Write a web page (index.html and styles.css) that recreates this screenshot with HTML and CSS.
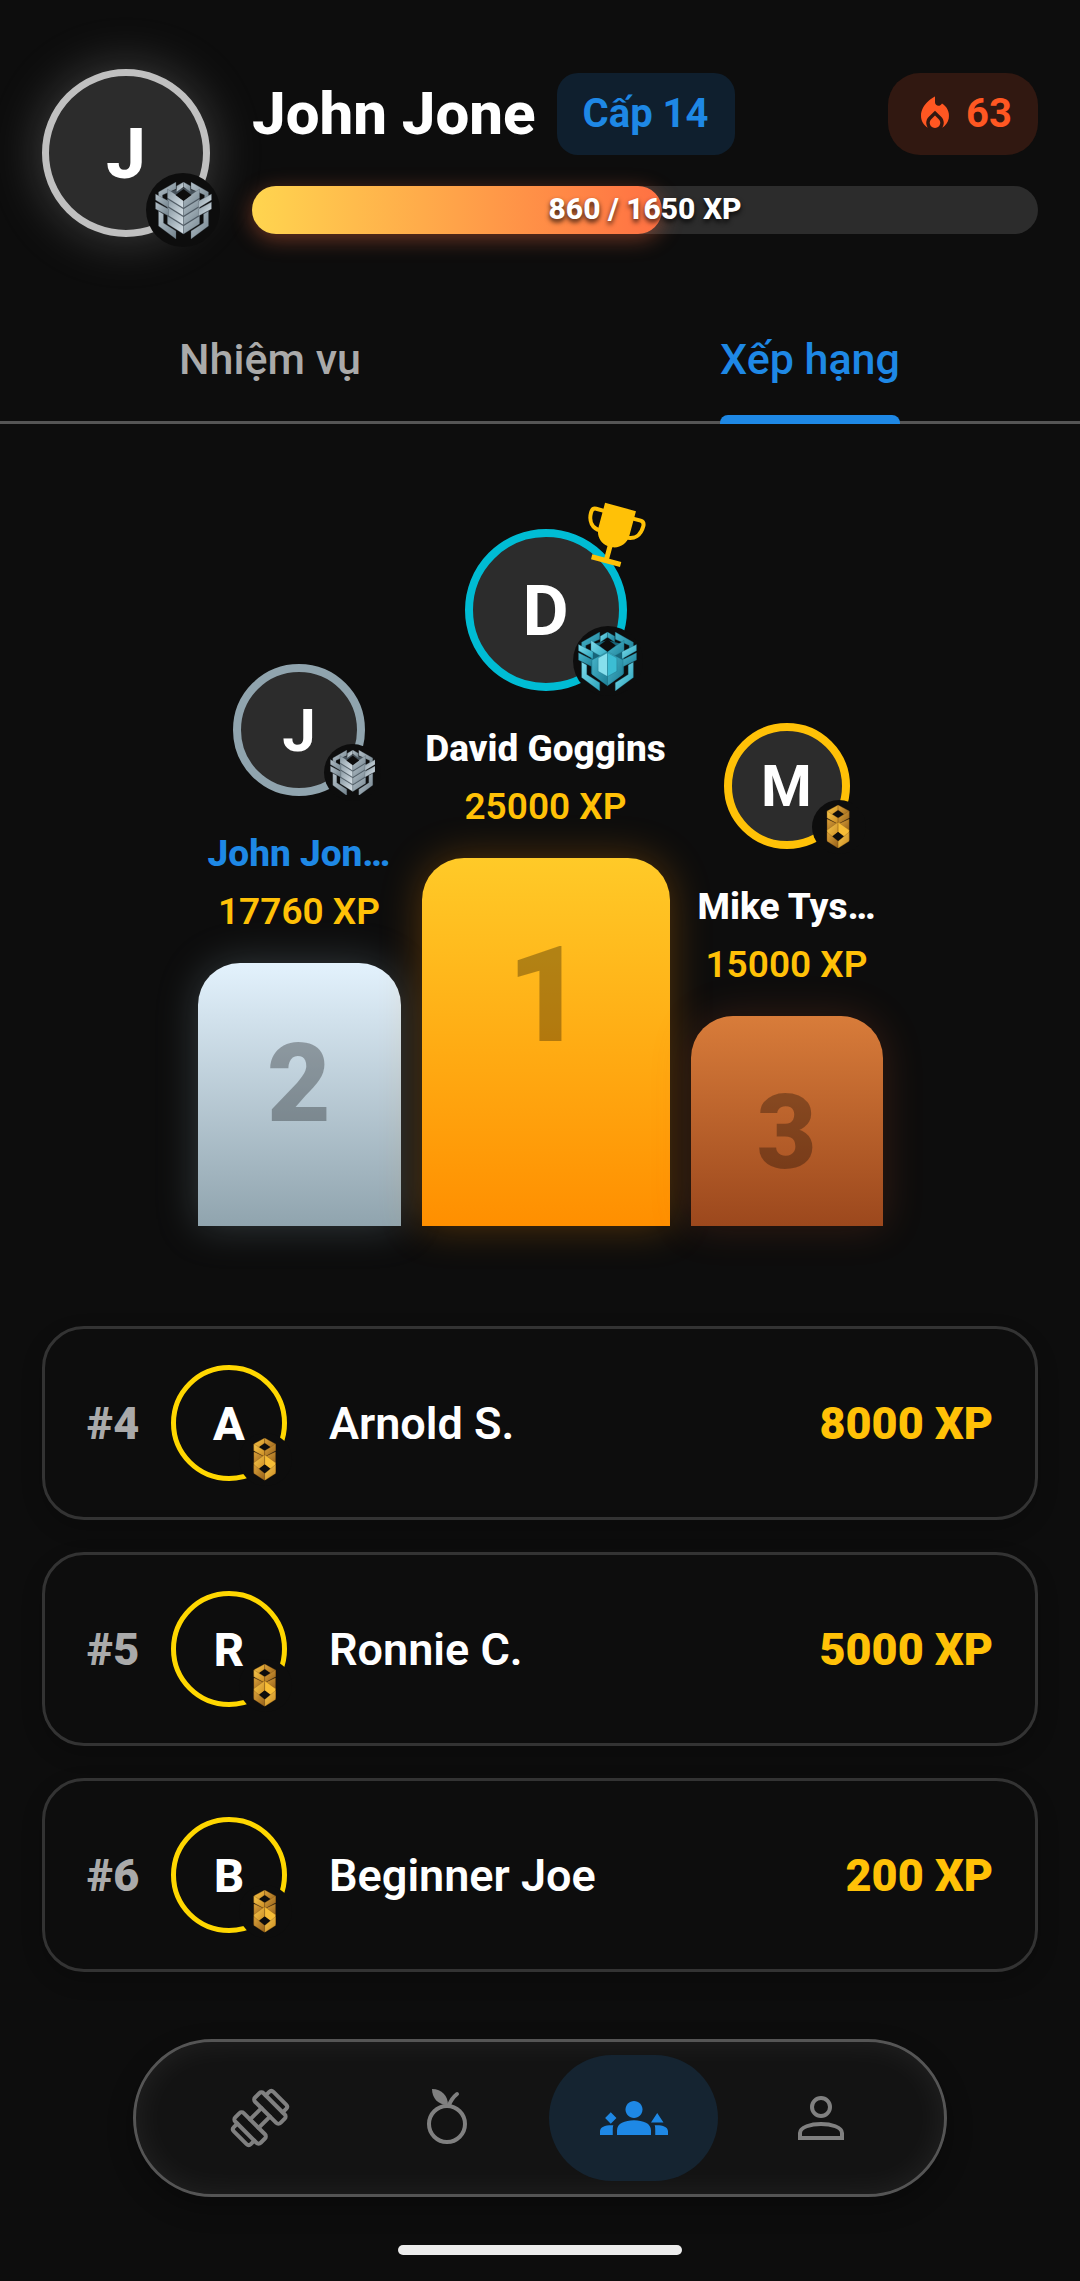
FILE: index.html
```html
<!DOCTYPE html>
<html lang="vi">
  <head>
    <meta charset="UTF-8" />
    <meta name="viewport" content="width=device-width, initial-scale=1.0" />
    <title>Xếp hạng</title>
    <link rel="stylesheet" href="styles.css">
  </head>
  <body>
    <!-- shared rank emblems -->
    <svg class="sprite" aria-hidden="true">
      <defs>
        <linearGradient id="silverLight" x1="0" y1="0" x2="1" y2="1">
          <stop offset="0" stop-color="#8797a1" />
          <stop offset="1" stop-color="#dbe5eb" />
        </linearGradient>
        <linearGradient id="silverDark" x1="0" y1="0" x2="1" y2="1">
          <stop offset="0" stop-color="#b4c1c9" />
          <stop offset="1" stop-color="#74848e" />
        </linearGradient>
        <linearGradient id="cyanLight" x1="0" y1="0" x2="1" y2="1">
          <stop offset="0" stop-color="#7fdcec" />
          <stop offset="1" stop-color="#2ba3bb" />
        </linearGradient>
        <linearGradient id="cyanDark" x1="0" y1="0" x2="1" y2="1">
          <stop offset="0" stop-color="#48b6cc" />
          <stop offset="1" stop-color="#1e7f96" />
        </linearGradient>
        <linearGradient id="goldLight" x1="0" y1="0" x2="1" y2="1">
          <stop offset="0" stop-color="#f6c64c" />
          <stop offset="1" stop-color="#c98a22" />
        </linearGradient>
        <linearGradient id="goldDark" x1="0" y1="0" x2="1" y2="1">
          <stop offset="0" stop-color="#dda33a" />
          <stop offset="1" stop-color="#94601a" />
        </linearGradient>
      </defs>

      <symbol id="rank-silver" viewBox="0 0 56 57">
        <path d="M12 10l16-4 16 4v31L28 52 12 41z" fill="#46525b" />
        <g fill="url(#silverDark)" stroke="#46525b" stroke-width=".3">
          <path d="M28 0l-7 4v6l7-5z" fill="url(#silverLight)" />
          <path d="M28 0l7 4v6l-7-5z" />
          <path d="M20.500 0L3 10v8l4 2v-7l13.500-6z" />
          <path d="M35.500 0L53 10v8l-4 2v-7L35.500 7z" />
          <path d="M3 29v15l17.500 13v-8L8 41v-9z" />
          <path d="M53 29v15L35.500 57v-8L48 41v-9z" />
          <path d="M12 34l16 10v8L12 42z" fill="url(#silverLight)" />
          <path d="M44 34L28 44v8l16-10z" />
          <path d="M12 25l16 10v8L12 33z" fill="url(#silverLight)" />
          <path d="M44 25L28 35v8l16-10z" />
          <path d="M12 17l16 10v7L12 24z" fill="url(#silverLight)" />
          <path d="M44 17L28 27v7l16-10z" />
          <path d="M12 7l16 11v8L12 16z" fill="url(#silverLight)" />
          <path d="M44 7L28 18v8l16-10z" />
          <path d="M0 12l13 7v7L0 18z" />
          <path d="M56 12l-13 7v7l13-8z" fill="url(#silverLight)" />
          <path d="M0 20l13 7v7L0 27z" />
          <path d="M56 20l-13 7v7l13-7z" fill="url(#silverLight)" />
        </g>
        <path d="M28 7l8 6-8 6-8-6z" fill="#0d0d0d" />
      </symbol>

      <symbol id="rank-cyan" viewBox="0 0 56 57">
        <path d="M12 12l16-4 16 4v28L28 52 12 40z" fill="#17657a" />
        <g fill="url(#cyanDark)" stroke="#17657a" stroke-width=".3">
          <path d="M28 0l-7 4v6l7-5z" fill="url(#cyanLight)" />
          <path d="M28 0l7 4v6l-7-5z" />
          <path d="M20.500 0L3 10v8l4 2v-7l13.500-6z" />
          <path d="M35.500 0L53 10v8l-4 2v-7L35.500 7z" />
          <path d="M3 29v15l17.500 13v-8L8 41v-9z" fill="url(#cyanLight)" />
          <path d="M53 29v15L35.500 57v-8L48 41v-9z" fill="url(#cyanLight)" />
          <path d="M12 8l16 11v8L12 18z" fill="url(#cyanLight)" />
          <path d="M44 8L28 19v8l16-9z" />
          <path d="M0 12l14 7v7L0 18z" fill="url(#cyanLight)" />
          <path d="M56 12l-14 7v7l14-8z" fill="url(#cyanLight)" />
          <path d="M0 20l14 7v7L0 27z" />
          <path d="M56 20l-14 7v7l14-7z" />
          <path d="M28 19l-15 8v14l15 11z" />
          <path d="M28 19l15 8v14L28 52z" />
          <path d="M28 20l-9 5v13l9 5z" fill="#86dfed" />
          <path d="M28 20l9 5v13l-9 5z" fill="#3cbdd4" />
        </g>
        <path d="M28 7l8 6-8 6-8-6z" fill="#0d0d0d" />
      </symbol>

      <symbol id="rank-gold" viewBox="-10 0 43 43">
        <g fill="url(#goldLight)" stroke="#7a4c12" stroke-width=".3">
          <path d="M11 0L0 6v7l11-8z" />
          <path d="M11 0l11 6v7L11 5z" fill="url(#goldDark)" />
          <path d="M0 14l11 5-11 7z" fill="url(#goldDark)" />
          <path d="M22 14l-11 5 11 7z" fill="url(#goldDark)" />
          <path d="M0 6l11 7v6L0 13z" />
          <path d="M22 6l-11 7v6l11-6z" fill="url(#goldDark)" />
          <path d="M11 17L0 25v10l11-8z" />
          <path d="M11 17l11 8v10l-11-8z" fill="#f7bd36" />
          <path d="M0 27l11 9v7L0 36z" fill="url(#goldDark)" />
          <path d="M22 27l-11 9v7l11-7z" />
        </g>
        <path d="M11 6l5 3-5 3-5-3zM11 27l5 4-5 4-5-4z" fill="#0d0d0d" />
      </symbol>
    </svg>

    <header class="profile">
      <div class="avatar avatar-profile">
        <span>J</span>
        <div class="rank-badge">
          <svg aria-hidden="true"><use href="#rank-silver" /></svg>
        </div>
      </div>
      <div class="profile-info">
        <div class="profile-row">
          <h1>John Jone</h1>
          <span class="level">Cấp 14</span>
          <span class="streak">
            <svg viewBox="0 0 24 24" aria-hidden="true">
              <path d="M12 12.900l-2.130 2.090c-.56.56-.87 1.290-.87 2.070C9 18.680 10.350 20 12 20s3-1.320 3-2.940c0-.78-.31-1.520-.87-2.070L12 12.900z" />
              <path d="M16 6l-.44.55C14.380 8.020 12 7.190 12 5.300V2S4 6 4 13c0 2.920 1.560 5.470 3.890 6.860-.56-.79-.89-1.760-.89-2.800 0-1.320.52-2.560 1.470-3.500L12 10.100l3.530 3.470c.95.93 1.470 2.170 1.470 3.500 0 1.020-.31 1.960-.85 2.750 1.890-1.150 3.290-3.060 3.710-5.300.66-3.550-1.070-6.900-3.860-8.520z" />
            </svg>
            63
          </span>
        </div>
        <div class="xp-bar">
          <div class="xp-fill" style="width: 52.12%"></div>
          <span class="xp-text">860 / 1650 XP</span>
        </div>
      </div>
    </header>

    <div class="tabs" role="tablist">
      <button class="tab" role="tab" aria-selected="false"><span>Nhiệm vụ</span></button>
      <button class="tab active" role="tab" aria-selected="true"><span>Xếp hạng</span></button>
    </div>

    <main>
      <section class="podium">
        <div class="place second">
          <div class="avatar">
            <span>J</span>
            <div class="rank-badge">
              <svg aria-hidden="true"><use href="#rank-silver" /></svg>
            </div>
          </div>
          <p class="name me">John Jon…</p>
          <p class="xp">17760 XP</p>
          <div class="block">2</div>
        </div>

        <div class="place first">
          <div class="avatar">
            <span>D</span>
            <svg class="trophy" viewBox="0 0 60 60" aria-hidden="true">
              <path class="trophy-line" d="M15 9H7c-3 0-4 2-4 5 0 9 5 15 14 15M45 9h8c3 0 4 2 4 5 0 9-5 15-14 15" />
              <path d="M14 1h32v25c0 9-6 15-13.500 16v12H45v5H15v-5h12.500V42C20 41 14 35 14 26z" />
            </svg>
            <div class="rank-badge">
              <svg aria-hidden="true"><use href="#rank-cyan" /></svg>
            </div>
          </div>
          <p class="name">David Goggins</p>
          <p class="xp">25000 XP</p>
          <div class="block">1</div>
        </div>

        <div class="place third">
          <div class="avatar">
            <span>M</span>
            <div class="rank-badge">
              <svg aria-hidden="true"><use href="#rank-gold" /></svg>
            </div>
          </div>
          <p class="name">Mike Tys…</p>
          <p class="xp">15000 XP</p>
          <div class="block">3</div>
        </div>
      </section>

      <ol class="ranking">
        <li class="card">
          <span class="position">#4</span>
          <div class="avatar">
            <span>A</span>
            <div class="rank-badge">
              <svg aria-hidden="true"><use href="#rank-gold" /></svg>
            </div>
          </div>
          <span class="card-name">Arnold S.</span>
          <span class="card-xp">8000 XP</span>
        </li>
        <li class="card">
          <span class="position">#5</span>
          <div class="avatar">
            <span>R</span>
            <div class="rank-badge">
              <svg aria-hidden="true"><use href="#rank-gold" /></svg>
            </div>
          </div>
          <span class="card-name">Ronnie C.</span>
          <span class="card-xp">5000 XP</span>
        </li>
        <li class="card">
          <span class="position">#6</span>
          <div class="avatar">
            <span>B</span>
            <div class="rank-badge">
              <svg aria-hidden="true"><use href="#rank-gold" /></svg>
            </div>
          </div>
          <span class="card-name">Beginner Joe</span>
          <span class="card-xp">200 XP</span>
        </li>
      </ol>
    </main>

    <nav class="bottom-nav">
      <a href="#workout" class="nav-item" aria-label="Tập luyện">
        <svg class="line" viewBox="-34 -34 68 68" aria-hidden="true">
          <g transform="rotate(-45)">
            <rect x="-20" y="-18" width="12" height="36" rx="3" />
            <rect x="8" y="-18" width="12" height="36" rx="3" />
            <path d="M-8-6H8M-8 6H8M-20-12h-5q-3 0-3 3V9q0 3 3 3h5M20-12h5q3 0 3 3V9q0 3-3 3h-5" />
          </g>
        </svg>
      </a>
      <a href="#nutrition" class="nav-item" aria-label="Dinh dưỡng">
        <svg class="line" viewBox="-34 -34 68 68" aria-hidden="true">
          <circle cx="0" cy="6" r="18" />
          <path d="M10-24q-5 4-8 11" />
          <path class="solid" d="M-15-29C-5-29 1-22 1-13C-9-13-15-20-15-29z" />
        </svg>
      </a>
      <a href="#ranking" class="nav-item active" aria-label="Xếp hạng" aria-current="page">
        <svg viewBox="0 0 24 24" aria-hidden="true">
          <path d="M12 12.750c1.630 0 3.070.39 4.240.9 1.080.48 1.760 1.560 1.760 2.730V18H6v-1.610c0-1.180.68-2.260 1.760-2.730 1.170-.52 2.610-.91 4.240-.91z" />
          <path d="M12 6c1.660 0 3 1.340 3 3s-1.340 3-3 3-3-1.340-3-3 1.340-3 3-3z" />
          <path d="M3.800 10l2 2-2 2-2-2zM20.200 10.200l2.200 3.400H18z" />
          <path d="M4.700 14.550C2.200 14.400 0 15 0 16.700V18h4.500v-1.610c0-.7 0-1.300.2-1.840zM19.300 14.550c2.500-.15 4.700.45 4.700 2.150V18h-4.500v-1.610c0-.7 0-1.300-.2-1.840z" />
        </svg>
      </a>
      <a href="#profile" class="nav-item" aria-label="Hồ sơ">
        <svg class="line" viewBox="-34 -34 68 68" aria-hidden="true">
          <circle cx="0" cy="-11" r="9" />
          <path class="sharp" d="M-21 20V15C-21 9-10 6 0 6S21 9 21 15V20z" />
        </svg>
      </a>
    </nav>
    <div class="home-bar"></div>
  </body>
</html>
```
FILE: styles.css
```css
* {
  margin: 0;
  padding: 0;
  box-sizing: border-box;
}
body {
  font-family: Roboto, "Noto Sans", sans-serif;
  background: #0d0d0d;
  color: #fff;
  min-height: 100vh;
  display: flex;
  flex-direction: column;
  padding-bottom: 26px;
}
.sprite {
  position: absolute;
  width: 0;
  height: 0;
}

/* avatars */
.avatar {
  position: relative;
  flex-shrink: 0;
  display: flex;
  align-items: center;
  justify-content: center;
  border: 8px solid #90a4ae;
  border-radius: 50%;
  background: #2c2c2c;
  font-weight: 700;
}
.rank-badge {
  position: absolute;
  right: -24px;
  bottom: -13px;
  width: 57px;
  height: 57px;
  display: flex;
  align-items: center;
  justify-content: center;
  border-radius: 50%;
  background: #0d0d0d;
}
.rank-badge svg {
  width: 80%;
  height: 80%;
}

/* profile header */
.profile {
  display: flex;
  gap: 42px;
  padding: 69px 42px 0;
}
.avatar-profile {
  width: 168px;
  height: 168px;
  border: 7px solid #c0c0c0;
  font-size: 71px;
  font-weight: 800;
  box-shadow: 0 0 52px rgba(192, 192, 192, 0.3);
}
.avatar-profile .rank-badge {
  right: -17px;
  bottom: -17px;
  width: 74px;
  height: 74px;
}
.avatar-profile .rank-badge svg {
  width: 57px;
  height: 57px;
}
.profile-info {
  flex: 1;
  padding-top: 4px;
}
.profile-row {
  display: flex;
  align-items: center;
  gap: 21px;
}
h1 {
  font-size: 60px;
  line-height: 82px;
  font-weight: 800;
}
.level,
.streak {
  padding: 0 26px;
  border-radius: 21px;
  background: #0f1f2e;
  color: #1e88e5;
  font-size: 40px;
  line-height: 82px;
  font-weight: 700;
}
.streak {
  display: flex;
  align-items: center;
  gap: 10px;
  margin-left: auto;
  border-radius: 32px;
  background: #311811;
  color: #ff5722;
}
.streak svg {
  width: 42px;
  height: 42px;
  fill: currentColor;
}
.xp-bar {
  position: relative;
  height: 48px;
  margin-top: 31px;
  border-radius: 24px;
  background: #2c2c2c;
}
.xp-fill {
  height: 100%;
  border-radius: 24px;
  background: linear-gradient(to right, #ffd54f, #ff7043);
  box-shadow: 0 5px 21px rgba(255, 112, 67, 0.4);
}
.xp-text {
  position: absolute;
  inset: 0;
  text-align: center;
  font-size: 30px;
  line-height: 46px;
  font-weight: 800;
  text-shadow: 0 3px 5px rgba(0, 0, 0, 0.8);
}

/* tabs */
.tabs {
  display: flex;
  margin-top: 60px;
  border-bottom: 3px solid #555;
}
.tab {
  flex: 1;
  border: none;
  background: none;
  color: #aaa;
  font-family: inherit;
  font-size: 43px;
  font-weight: 500;
  line-height: 52px;
  cursor: pointer;
}
.tab span {
  position: relative;
  display: inline-block;
  padding: 36px 0;
}
.tab.active {
  color: #1e88e5;
}
.tab.active span::after {
  content: "";
  position: absolute;
  left: 0;
  right: 0;
  bottom: -3px;
  height: 9px;
  border-radius: 8px 8px 0 0;
  background: #1e88e5;
}

/* podium */
.podium {
  display: flex;
  align-items: flex-end;
  justify-content: center;
  gap: 21px;
  margin-top: 105px;
}
.place {
  display: flex;
  flex-direction: column;
  align-items: center;
  width: 203px;
  font-size: 37px;
  line-height: 43px;
  white-space: nowrap;
}
.place .avatar {
  width: 132px;
  height: 132px;
  margin-bottom: 36px;
  font-size: 60px;
}
.name {
  margin-bottom: 15px;
  font-weight: 800;
}
.name.me {
  color: #1e88e5;
}
.xp {
  margin-bottom: 30px;
  color: #ffc107;
  font-weight: 600;
}
.block {
  width: 100%;
  height: 263px;
  padding-top: 56px;
  border-radius: 42px 42px 0 0;
  background: linear-gradient(#e3f2fd, #90a4ae);
  box-shadow: 0 0 42px rgba(144, 164, 174, 0.3);
  color: rgba(0, 0, 0, 0.3);
  font-size: 110px;
  line-height: normal;
  font-weight: 900;
  text-align: center;
}
.first {
  width: 248px;
}
.first .avatar {
  width: 162px;
  height: 162px;
  border-color: #00bcd4;
  font-size: 71px;
}
.first .rank-badge {
  width: 70px;
  height: 70px;
}
.first .rank-badge svg {
  width: 59px;
  height: 59px;
}
.trophy {
  position: absolute;
  top: -32px;
  right: -24px;
  width: 60px;
  height: 60px;
  fill: #ffc107;
  transform: rotate(15deg);
}
.trophy-line {
  fill: none;
  stroke: #ffc107;
  stroke-width: 4;
}
.first .block {
  height: 368px;
  padding-top: 59px;
  background: linear-gradient(#ffca28, #ff8f00);
  box-shadow: 0 0 42px rgba(255, 143, 0, 0.3);
  font-size: 134px;
}
.third {
  width: 192px;
}
.third .avatar {
  width: 126px;
  height: 126px;
  border-color: #ffc107;
  font-size: 58px;
}
.third .rank-badge {
  width: 54px;
  height: 54px;
}
.third .block {
  height: 210px;
  background: linear-gradient(#d87c3a, #9c481d);
  box-shadow: 0 0 42px rgba(216, 92, 42, 0.2);
  font-size: 103px;
}

/* ranking list */
.ranking {
  display: flex;
  flex-direction: column;
  gap: 32px;
  margin: 100px 42px 0;
  list-style: none;
}
.card {
  display: flex;
  align-items: center;
  height: 194px;
  padding: 0 42px;
  border: 3px solid #333;
  border-radius: 42px;
  box-shadow: 0 8px 21px rgba(0, 0, 0, 0.2);
  font-size: 45px;
}
.position {
  width: 84px;
  color: #aaa;
  font-weight: 900;
}
.card .avatar {
  width: 116px;
  height: 116px;
  border: 5px solid #ffd700;
  background: none;
  font-size: 47px;
  font-weight: 800;
}
.card .rank-badge {
  right: -10px;
  bottom: -10px;
  width: 53px;
  height: 53px;
}
.card-name {
  flex: 1;
  margin-left: 42px;
  font-weight: 600;
}
.card-xp {
  color: #ffc107;
  font-weight: 900;
}

/* bottom navigation */
.bottom-nav {
  display: flex;
  width: 814px;
  max-width: 92%;
  margin: 67px auto 0;
  padding: 13px 30px;
  border: 3px solid #555;
  border-radius: 79px;
  background: #131313;
  box-shadow: inset 0 0 32px rgba(255, 255, 255, 0.07), 0 10px 26px rgba(0, 0, 0, 0.3);
}
.nav-item {
  flex: 1;
  display: flex;
  align-items: center;
  justify-content: center;
  height: 126px;
  margin: 0 9px;
  border-radius: 63px;
  color: #808080;
}
.nav-item.active {
  background: #152431;
  color: #1e88e5;
}
.nav-item svg {
  width: 68px;
  height: 68px;
  fill: currentColor;
}
.nav-item .line {
  fill: none;
  stroke: currentColor;
  stroke-width: 4;
  stroke-linecap: round;
  stroke-linejoin: round;
}
.nav-item .solid {
  fill: currentColor;
  stroke: none;
}
.nav-item .sharp {
  stroke-linejoin: miter;
}
.home-bar {
  width: 284px;
  height: 10px;
  margin: 48px auto 0;
  border-radius: 5px;
  background: #ececec;
}
```
